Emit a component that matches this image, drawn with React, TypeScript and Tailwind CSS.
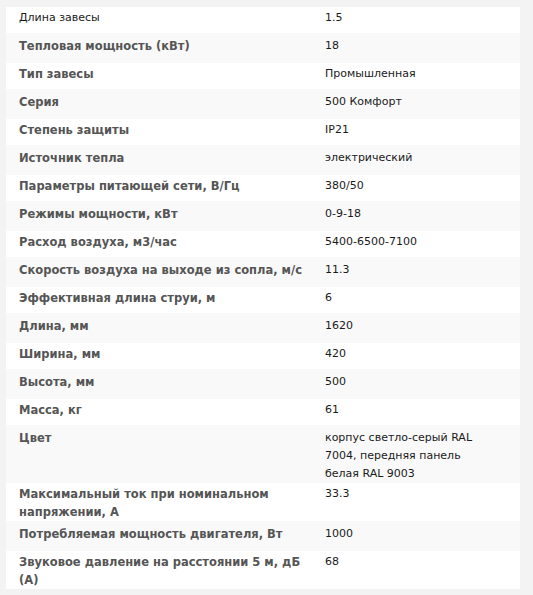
import React from 'react';

interface Spec {
  label: string;
  value: React.ReactNode;
  plain?: boolean;
}

const specs: Spec[] = [
  { label: 'Длина завесы', value: '1.5', plain: true },
  { label: 'Тепловая мощность (кВт)', value: '18' },
  { label: 'Тип завесы', value: 'Промышленная' },
  { label: 'Серия', value: '500 Комфорт' },
  { label: 'Степень защиты', value: 'IP21' },
  { label: 'Источник тепла', value: 'электрический' },
  { label: 'Параметры питающей сети, В/Гц', value: '380/50' },
  { label: 'Режимы мощности, кВт', value: '0-9-18' },
  { label: 'Расход воздуха, м3/час', value: '5400-6500-7100' },
  { label: 'Скорость воздуха на выходе из сопла, м/с', value: '11.3' },
  { label: 'Эффективная длина струи, м', value: '6' },
  { label: 'Длина, мм', value: '1620' },
  { label: 'Ширина, мм', value: '420' },
  { label: 'Высота, мм', value: '500' },
  { label: 'Масса, кг', value: '61' },
  { label: 'Цвет', value: 'корпус светло-серый RAL 7004, передняя панель белая RAL 9003' },
  { label: 'Максимальный ток при номинальном напряжении, А', value: '33.3' },
  { label: 'Потребляемая мощность двигателя, Вт', value: '1000' },
  { label: 'Звуковое давление на расстоянии 5 м, дБ (А)', value: '68' },
];

export default function App() {
  return (
    <div
      className="w-[533px] h-[595px] bg-[#f3f3f3] pt-[7px] pl-[6px] text-[11px] leading-[18px]"
      style={{ fontFamily: '"DejaVu Sans", Verdana, sans-serif' }}
    >
      <div className="w-[514px] bg-[#f9f9f9]">
        {specs.map((row, i) => {
          const odd = i % 2 === 0;
          return (
            <div
              key={row.label}
              className={
                odd
                  ? 'flex bg-white min-h-[26px] pt-[2px]'
                  : 'flex min-h-[30px] pt-[4px]'
              }
            >
              <div
                className={
                  row.plain
                    ? 'w-[313px] shrink-0 pl-[13px] pr-[4px] text-[#1a1a1a]'
                    : 'w-[313px] shrink-0 pl-[13px] pr-[4px] text-[11.5px] font-bold text-[#555555]'
                }
              >
                {row.label}
              </div>
              <div className="w-[166px] pl-[6px] text-[#1a1a1a]">{row.value}</div>
            </div>
          );
        })}
      </div>
    </div>
  );
}
